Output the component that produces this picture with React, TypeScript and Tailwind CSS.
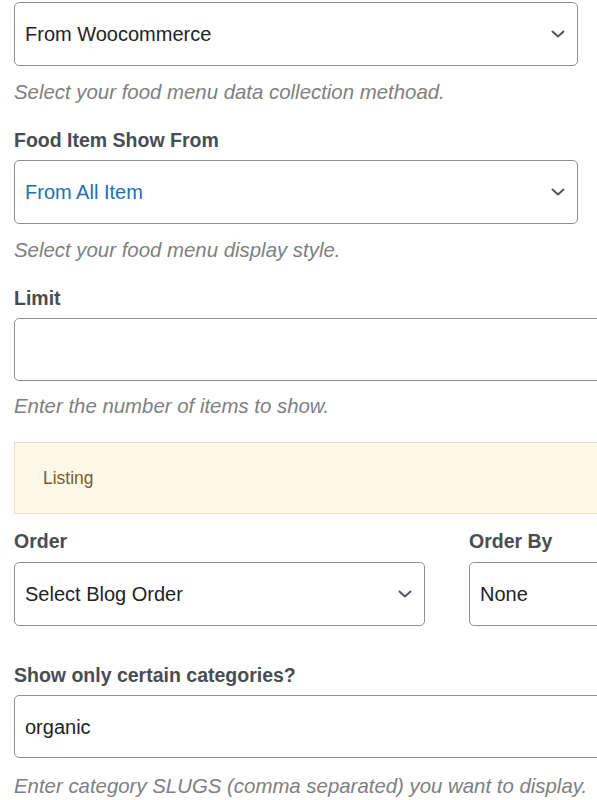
import React from 'react';

const Chevron: React.FC = () => (
  <svg width="14" height="8" viewBox="0 0 14 8" fill="none" className="shrink-0">
    <path d="M1.5 1.5 L7 6.5 L12.5 1.5" stroke="#50575e" strokeWidth="2" strokeLinecap="round" strokeLinejoin="round" />
  </svg>
);

const SelectBox: React.FC<{ value: string; blue?: boolean; className?: string }> = ({ value, blue, className = '' }) => (
  <div className={`h-[64px] flex items-center justify-between pl-[10px] pr-[12px] border border-[#8c8f94] rounded-[5px] bg-white ${className}`}>
    <span className={`text-[20px] ${blue ? 'text-[#2271b1]' : 'text-[#1d2327]'}`}>{value}</span>
    <Chevron />
  </div>
);

const InputBox: React.FC<{ value?: string; className?: string }> = ({ value = '', className = '' }) => (
  <div className={`h-[63px] flex items-center pl-[10px] border border-[#8c8f94] rounded-[5px] bg-white ${className}`}>
    <span className="text-[20px] text-[#1d2327]">{value}</span>
  </div>
);

const Label: React.FC<{ children: React.ReactNode; className?: string }> = ({ children, className = '' }) => (
  <div className={`text-[19.5px] leading-[26px] font-bold text-[#484d52] ${className}`}>{children}</div>
);

const Hint: React.FC<{ children: React.ReactNode; className?: string }> = ({ children, className = '' }) => (
  <p className={`text-[20.4px] leading-[26px] italic text-[#808080] ${className}`}>{children}</p>
);

export default function App() {
  return (
    <div className="w-[597px] h-[800px] overflow-hidden bg-white pl-[14px] pt-[2px] font-['Liberation_Sans',Arial,sans-serif]">
      {/* data source */}
      <SelectBox value="From Woocommerce" className="w-[564px]" />
      <Hint className="mt-[13px]">Select your food menu data collection methoad.</Hint>

      {/* display style */}
      <Label className="mt-[22px]">Food Item Show From</Label>
      <SelectBox value="From All Item" blue className="w-[564px] mt-[7px]" />
      <Hint className="mt-[13px]">Select your food menu display style.</Hint>

      {/* limit */}
      <Label className="mt-[22px]">Limit</Label>
      <InputBox className="w-[640px] mt-[7px]" />
      <Hint className="mt-[12px]">Enter the number of items to show.</Hint>

      {/* listing notice */}
      <div className="w-[640px] h-[72px] mt-[23px] flex items-center pl-[28px] bg-[#fcf9e8] border border-[#e6e1c8]">
        <span className="text-[17.5px] text-[#7a5c2e]">Listing</span>
      </div>

      {/* order */}
      <div className="flex gap-[44px] mt-[14px]">
        <div className="w-[411px] shrink-0">
          <Label>Order</Label>
          <SelectBox value="Select Blog Order" className="mt-[8px]" />
        </div>
        <div className="w-[300px] shrink-0">
          <Label>Order By</Label>
          <InputBox value="None" className="mt-[8px] h-[64px]" />
        </div>
      </div>

      {/* categories */}
      <Label className="mt-[36px]">Show only certain categories?</Label>
      <InputBox value="organic" className="w-[640px] mt-[7px]" />
      <Hint className="mt-[15px]">Enter category SLUGS (comma separated) you want to display.</Hint>
    </div>
  );
}
